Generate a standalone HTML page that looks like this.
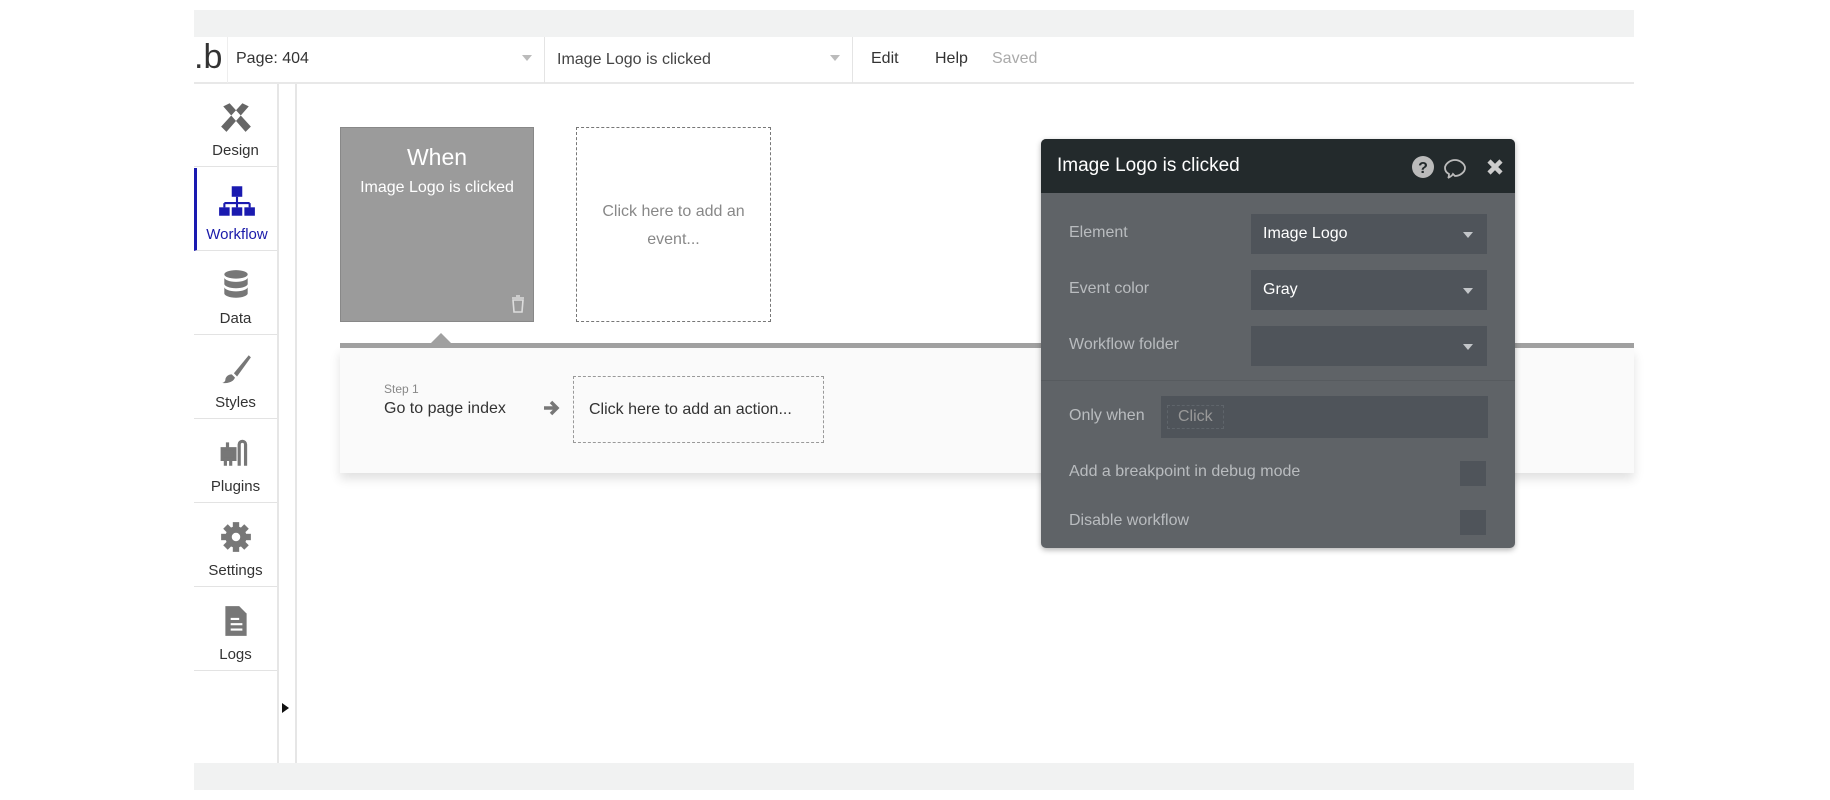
<!DOCTYPE html>
<html><head><style>
*{box-sizing:border-box;margin:0;padding:0}
body{width:1830px;height:800px;background:#fff;font-family:"Liberation Sans",sans-serif;position:relative;overflow:hidden;color:#222}
.a{position:absolute}
.lbl{font-size:16px;color:#b9bcbf}
.dd{background:#4f545a;color:#fff;font-size:16px;padding:0 12px;display:flex;align-items:center}
.dd:after{content:"";position:absolute;right:14px;top:50%;margin-top:-2px;border:5px solid transparent;border-top:6px solid #c3c6c9}
.nav{position:absolute;left:194px;width:83px;height:83px;border-bottom:1px solid #e3e3e3;text-align:center;font-size:15px;color:#333}
.nav svg{display:block;margin:16px auto 8px}
.hdd:after{content:"";position:absolute;right:12px;top:18px;border:5px solid transparent;border-top:6px solid #bbb}
</style></head><body>
<div class="a" style="left:194px;top:10px;width:1440px;height:27px;background:#f1f2f2"></div>
<div class="a" style="left:194px;top:763px;width:1440px;height:27px;background:#f1f2f2"></div>
<div class="a" style="left:194px;top:37px;width:1440px;height:47px;border-bottom:2px solid #e8e8e8"></div>
<div class="a" style="left:194px;top:38px;font-size:34px;color:#333">.b</div>
<div class="a" style="left:227px;top:37px;width:1px;height:46px;background:#eee"></div>
<div class="a hdd" style="left:228px;top:37px;width:316px;height:46px"><span class="a" style="left:8px;top:13px;font-size:16px;color:#333">Page: 404</span></div>
<div class="a" style="left:544px;top:37px;width:1px;height:46px;background:#e4e4e4"></div>
<div class="a hdd" style="left:545px;top:37px;width:307px;height:46px"><span class="a" style="left:12px;top:14px;font-size:16px;color:#444">Image Logo is clicked</span></div>
<div class="a" style="left:852px;top:37px;width:1px;height:46px;background:#e4e4e4"></div>
<div class="a" style="left:871px;top:50px;font-size:16px;color:#333">Edit</div>
<div class="a" style="left:935px;top:50px;font-size:16px;color:#333">Help</div>
<div class="a" style="left:992px;top:50px;font-size:16px;color:#aaa">Saved</div>
<div class="a" style="left:277px;top:84px;width:2px;height:679px;background:#e6e6e6"></div>
<div class="a" style="left:295px;top:84px;width:2px;height:679px;background:#e6e6e6"></div>
<div class="a" style="left:282px;top:703px;border:5px solid transparent;border-left:7px solid #111"></div>
<div class="nav" style="top:84px"><svg width="34" height="34" viewBox="0 0 32 32"><path d="M4 6l6-3 20 22-5 5zM28 6l-6-3-20 22 5 5z" fill="#666"/></svg>Design</div>
<div class="nav" style="top:168px;color:#1a1aaa;border-left:3px solid #1a1ab0"><svg width="40" height="34" viewBox="0 0 38 32"><rect x="14" y="2" width="10" height="10" fill="#1a1ab0"/><path d="M19 12v6M7 18h24M7 18v4M19 18v4M31 18v4" stroke="#1a1ab0" stroke-width="2" fill="none"/><rect x="2" y="22" width="10" height="8" fill="#1a1ab0"/><rect x="14" y="22" width="10" height="8" fill="#1a1ab0"/><rect x="26" y="22" width="10" height="8" fill="#1a1ab0"/></svg>Workflow</div>
<div class="nav" style="top:252px"><svg width="30" height="34" viewBox="0 0 28 32"><ellipse cx="14" cy="6" rx="11" ry="4" fill="#777"/><path d="M3 9v6c0 2 5 4 11 4s11-2 11-4V9c0 2-5 4-11 4S3 11 3 9zM3 18v6c0 2 5 4 11 4s11-2 11-4v-6c0 2-5 4-11 4S3 20 3 18z" fill="#777"/></svg>Data</div>
<div class="nav" style="top:336px"><svg width="34" height="34" viewBox="0 0 32 32"><path d="M28 3L14 20l3 3L30 5z" fill="#777"/><path d="M12 21c-4 0-6 3-6 5s-2 3-3 3c5 1 11-1 12-5z" fill="#777"/></svg>Styles</div>
<div class="nav" style="top:420px"><svg width="34" height="34" viewBox="0 0 32 32"><path d="M3 12h12v10H3zM6 22v6M11 22v6M8 6v6" stroke="#777" stroke-width="3" fill="#777"/><path d="M19 28V8a3 3 0 016 0v20" stroke="#777" stroke-width="3" fill="none"/></svg>Plugins</div>
<div class="nav" style="top:504px"><svg width="34" height="34" viewBox="0 0 32 32"><g fill="#777"><circle cx="16" cy="16" r="10"/><rect x="13" y="2" width="6" height="28"/><rect x="2" y="13" width="28" height="6"/><rect x="13" y="2" width="6" height="28" transform="rotate(45 16 16)"/><rect x="13" y="2" width="6" height="28" transform="rotate(-45 16 16)"/></g><circle cx="16" cy="16" r="4" fill="#fff"/></svg>Settings</div>
<div class="nav" style="top:588px"><svg width="28" height="34" viewBox="0 0 26 32"><path d="M3 2h13l7 7v21H3z" fill="#777"/><path d="M8 14h8M8 19h11M8 24h11" stroke="#fff" stroke-width="2"/></svg>Logs</div>
<div class="a" style="left:340px;top:127px;width:194px;height:195px;background:#9b9b9b;border:1px solid #888;text-align:center;color:#fff">
<div style="font-size:23px;margin-top:16px">When</div>
<div style="font-size:16px;margin-top:8px">Image Logo is clicked</div>
<svg class="a" style="right:8px;bottom:8px" width="14" height="18" viewBox="0 0 14 18"><path d="M1 3h12M5 1h4M2 5h10l-1 12H3z" stroke="#ddd" stroke-width="1.6" fill="none"/></svg></div>
<div class="a" style="left:576px;top:127px;width:195px;height:195px;border:1px dashed #777;text-align:center;color:#888;font-size:16px;line-height:28px;padding-top:70px">Click here to add an<br>event...</div>
<div class="a" style="left:340px;top:348px;width:1294px;height:125px;background:#fafafa;box-shadow:0 6px 10px rgba(0,0,0,.12)"></div>
<div class="a" style="left:340px;top:343px;width:1294px;height:5px;background:#a0a0a0"></div>
<div class="a" style="left:431px;top:333px;border:10px solid transparent;border-bottom:10px solid #a0a0a0;border-top:0"></div>
<div class="a" style="left:384px;top:382px;font-size:12px;color:#888">Step 1</div>
<div class="a" style="left:384px;top:400px;font-size:16px;color:#333">Go to page index</div>
<svg class="a" style="left:543px;top:398px" width="18" height="20" viewBox="0 0 18 20"><path d="M1 10h12M8 4l6 6-6 6" stroke="#777" stroke-width="3.5" fill="none"/></svg>
<div class="a" style="left:573px;top:376px;width:251px;height:67px;border:1px dashed #999;font-size:16px;color:#333;padding:24px 0 0 15px">Click here to add an action...</div>
<div class="a" style="left:1041px;top:139px;width:474px;height:409px;background:#5f6367;border-radius:5px;box-shadow:0 2px 6px rgba(0,0,0,.3);overflow:hidden">
<div style="height:54px;background:#232a2c;color:#fff;font-size:19px;padding:16px 0 0 16px">Image Logo is clicked</div>
<svg class="a" style="right:6px;top:14px" width="100" height="28" viewBox="0 0 100 28"><circle cx="14" cy="14" r="11" fill="#bbb"/><text x="14" y="20" font-family="Liberation Sans" font-weight="bold" font-size="16" fill="#232a2c" text-anchor="middle">?</text><path d="M44 21c-1 2-3 3-5 4 1-1 1-3 1-4-2-1-4-3-4-6 0-4 5-8 10-8s10 4 10 8-5 8-10 8z" stroke="#bbb" stroke-width="1.8" fill="none"/><path d="M80 8l12 12M92 8L80 20" stroke="#ccc" stroke-width="4.5"/></svg>
<div class="a lbl" style="left:28px;top:85px">Element</div>
<div class="a dd" style="left:210px;top:75px;width:236px;height:40px">Image Logo</div>
<div class="a lbl" style="left:28px;top:141px">Event color</div>
<div class="a dd" style="left:210px;top:131px;width:236px;height:40px">Gray</div>
<div class="a lbl" style="left:28px;top:197px">Workflow folder</div>
<div class="a dd" style="left:210px;top:187px;width:236px;height:40px"></div>
<div class="a" style="left:0;top:241px;width:474px;height:1px;background:#575b5f"></div>
<div class="a lbl" style="left:28px;top:268px">Only when</div>
<div class="a" style="left:120px;top:257px;width:327px;height:42px;background:#4f545a"><span class="a" style="left:6px;top:9px;border:1px dashed #5f656b;padding:2px 10px;font-size:16px;color:#999">Click</span></div>
<div class="a lbl" style="left:28px;top:324px">Add a breakpoint in debug mode</div>
<div class="a" style="left:419px;top:322px;width:26px;height:25px;background:#4f545a"></div>
<div class="a lbl" style="left:28px;top:373px">Disable workflow</div>
<div class="a" style="left:419px;top:371px;width:26px;height:25px;background:#4f545a"></div>
</div>
</body></html>
